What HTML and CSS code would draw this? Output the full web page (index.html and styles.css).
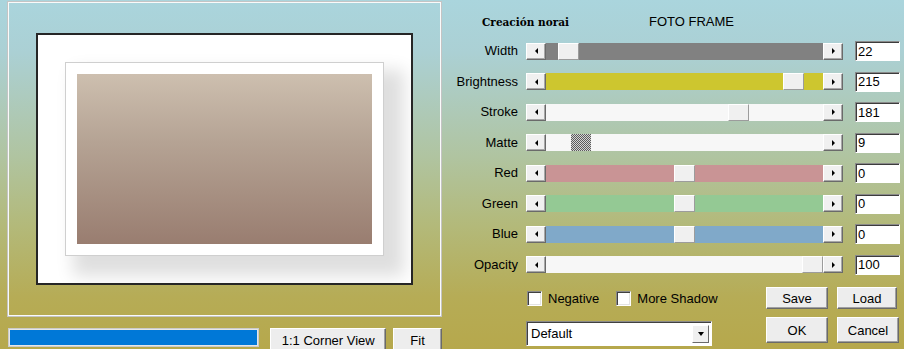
FILE: index.html
```html
<!DOCTYPE html>
<html lang="es">
<head>
  <meta charset="UTF-8">
  <title>Foto Frame</title>
  <link rel="stylesheet" href="styles.css">
</head>
<body>
  <!-- Columna izquierda: vista previa -->
  <div class="izquierda">
    <div class="preview">
      <div class="marco">
        <div class="tarjeta"><div class="foto"></div></div>
      </div>
    </div>
    <div class="estado">
      <div class="progreso"></div>
      <button class="btn corner">1:1 Corner View</button>
      <button class="btn fit">Fit</button>
    </div>
  </div>

  <!-- Columna derecha: controles -->
  <div class="derecha">
    <div class="cabecera">
      <span class="credito">Creación norai</span>
      <span class="titulo">FOTO FRAME</span>
    </div>

    <div class="controles">
      <div class="etiqueta">Width</div>
      <div class="scroll"><span class="flecha izq"></span><div class="pista gris"><span class="thumb" style="left:12px"></span></div><span class="flecha der"></span></div>
      <input class="valor" type="text" value="22">

      <div class="etiqueta">Brightness</div>
      <div class="scroll"><span class="flecha izq"></span><div class="pista amarillo"><span class="thumb" style="left:237px"></span></div><span class="flecha der"></span></div>
      <input class="valor" type="text" value="215">

      <div class="etiqueta">Stroke</div>
      <div class="scroll"><span class="flecha izq"></span><div class="pista"><span class="thumb" style="left:182px"></span></div><span class="flecha der"></span></div>
      <input class="valor" type="text" value="181">

      <div class="etiqueta">Matte</div>
      <div class="scroll"><span class="flecha izq"></span><div class="pista"><span class="thumb activo" style="left:25px"></span></div><span class="flecha der"></span></div>
      <input class="valor" type="text" value="9">

      <div class="etiqueta">Red</div>
      <div class="scroll"><span class="flecha izq"></span><div class="pista rojo"><span class="thumb" style="left:128px"></span></div><span class="flecha der"></span></div>
      <input class="valor" type="text" value="0">

      <div class="etiqueta">Green</div>
      <div class="scroll"><span class="flecha izq"></span><div class="pista verde"><span class="thumb" style="left:128px"></span></div><span class="flecha der"></span></div>
      <input class="valor" type="text" value="0">

      <div class="etiqueta">Blue</div>
      <div class="scroll"><span class="flecha izq"></span><div class="pista azul"><span class="thumb" style="left:128px"></span></div><span class="flecha der"></span></div>
      <input class="valor" type="text" value="0">

      <div class="etiqueta">Opacity</div>
      <div class="scroll"><span class="flecha izq"></span><div class="pista"><span class="thumb" style="left:256px"></span></div><span class="flecha der"></span></div>
      <input class="valor" type="text" value="100">
    </div>

    <div class="pie">
      <div class="fila">
        <div class="checks">
          <label class="check"><span class="caja"></span>Negative</label>
          <label class="check"><span class="caja"></span>More Shadow</label>
        </div>
        <button class="btn chico">Save</button>
        <button class="btn chico load">Load</button>
      </div>
      <div class="fila dos">
        <div class="combo">Default<span class="abajo"></span></div>
        <button class="btn grande ok">OK</button>
        <button class="btn grande cancel">Cancel</button>
      </div>
    </div>
  </div>
</body>
</html>
```

FILE: styles.css
```css
/* Estructura general de la ventana */
* {
  box-sizing: border-box;
}

body {
  margin: 0;
  width: 904px;
  height: 349px;
  overflow: hidden;
  display: flex;                                   /* Dos columnas */
  font-family: "Liberation Sans", Arial, sans-serif;
  font-size: 13px;
  color: #000;
  background: linear-gradient(to bottom, #aad5dd 0%, #abd0d4 15%, #b0c4a0 45%, #b3b979 65%, #b6ac56 85%, #b6a84c 100%);
}

/* Columna de la vista previa */
.izquierda {
  width: 442px;
  padding: 1px 0 0 7px;
}

.preview {
  width: 435px;
  height: 316px;
  border: 1px solid #c4c4c4;
  box-shadow: inset 1px 1px 0 #fafafa, inset -1px -1px 0 #fafafa;
  display: flex;
  align-items: center;
  justify-content: center;
}

/* Marco negro con el paspartú blanco */
.marco {
  width: 377px;
  height: 252px;
  border: 2px solid #262626;
  background: #fff;
  display: flex;
  align-items: center;
  justify-content: center;
  overflow: hidden;
}

.tarjeta {
  width: 319px;
  height: 194px;
  padding: 11px;
  background: #fff;
  border: 1px solid #cfcfcf;
  box-shadow: 14px 14px 16px 6px rgba(0, 0, 0, 0.13);
}

.foto {
  width: 100%;
  height: 100%;
  background: linear-gradient(to bottom, #cdbfaf, #b5a394 40%, #997d70);
}

/* Barra inferior con progreso y botones */
.estado {
  display: flex;
  align-items: flex-start;
  margin-top: 11px;
}

.progreso {
  width: 252px;
  height: 19px;
  margin-left: 1px;
  background: #0078d7;
  border: 1px solid #cbcbcb;
  box-shadow: inset 0 0 0 1px #e6e6e6;
}

.btn {
  font-family: inherit;
  font-size: 13px;
  color: #000;
  padding: 0;
  background: #ededed;
  border: 1px solid;
  border-color: #fff #6a6a6a #6a6a6a #fff;  /* Relieve clásico */
  box-shadow: inset -1px -1px 0 #a0a0a0;
}

.corner {
  width: 116px;
  height: 24px;
  margin-left: 11px;
}

.fit {
  width: 49px;
  height: 24px;
  margin-left: 7px;
}

/* Columna de controles */
.derecha {
  width: 462px;
  display: flex;
  flex-direction: column;
}

.cabecera {
  height: 41px;
  padding: 14px 0 0 40px;
  display: flex;
  align-items: baseline;
  line-height: 15px;
}

.credito {
  font-family: "DejaVu Serif", serif;
  font-weight: bold;
  font-size: 10.5px;
  width: 167px;
}

.titulo {
  font-size: 13px;
}

/* Rejilla de los deslizadores */
.controles {
  display: grid;
  grid-template-columns: 76px 317px 45px;
  grid-auto-rows: 20px;
  column-gap: 8px;
  row-gap: 10.57px;
  align-items: center;
}

.etiqueta {
  text-align: right;
  line-height: 20px;
}

.scroll {
  display: flex;
  height: 17px;
}

.flecha {
  width: 20px;
  height: 17px;
  background: #f0f0f0;
  border: 1px solid;
  border-color: #fff #6a6a6a #6a6a6a #fff;
  box-shadow: inset -1px -1px 0 #a8a8a8;
  display: flex;
  align-items: center;
  justify-content: center;
}

/* Triangulitos de las flechas */
.flecha::before {
  content: "";
  border-top: 3px solid transparent;
  border-bottom: 3px solid transparent;
}

.izq::before {
  border-right: 3px solid #000;
}

.der::before {
  border-left: 3px solid #000;
}

.pista {
  flex: 1;
  position: relative;
  background: #f7f7f7;
}

.gris { background: #818181; }
.amarillo { background: #cdc62f; }
.rojo { background: #c99495; }
.verde { background: #94c994; }
.azul { background: #80a9c9; }

.thumb {
  position: absolute;
  top: 0;
  width: 21px;
  height: 17px;
  background: #f0f0f0;
  border: 1px solid;
  border-color: #fff #9c9c9c #9c9c9c #fff;
}

/* Thumb presionado con trama */
.thumb.activo {
  border: none;
  width: 20px;
  background: repeating-conic-gradient(#5c5c5c 0% 25%, #d4d4d4 0% 50%) 0 0 / 2px 2px;
}

.valor {
  width: 45px;
  height: 20px;
  margin-left: 4px;
  padding: 0 0 0 2px;
  font-family: inherit;
  font-size: 13px;
  color: #000;
  background: #fff;
  border: 1px solid;
  border-color: #8a8a8a #fff #fff #8a8a8a;
  box-shadow: inset 1px 1px 0 #3c3c3c;
  outline: none;
}

/* Parte inferior: casillas y botones */
.pie {
  margin: 12.5px 0 0 84px;
}

.fila {
  display: flex;
  align-items: center;
  height: 22px;
}

.fila.dos {
  align-items: flex-start;
  height: 26px;
  margin-top: 8px;
}

.checks {
  width: 240px;
  display: flex;
  gap: 17px;
  padding-left: 1px;
}

.check {
  display: flex;
  align-items: center;
  gap: 6px;
}

.caja {
  width: 15px;
  height: 15px;
  background: #fff;
  border: 1px solid;
  border-color: #8a8a8a #fff #fff #8a8a8a;
  box-shadow: inset 1px 1px 0 #404040, inset -1px -1px 0 #e3e3e3;
}

.chico {
  width: 62px;
  height: 22px;
}

.load {
  width: 60px;
  margin-left: 9px;
}

.combo {
  width: 186px;
  height: 25px;
  margin-top: 4px;
  padding-left: 4px;
  line-height: 23px;
  background: #fff;
  border: 1px solid;
  border-color: #8a8a8a #fff #fff #8a8a8a;
  box-shadow: inset 1px 1px 0 #404040;
  display: flex;
  justify-content: space-between;
  align-items: center;
  padding-right: 2px;
}

.abajo {
  width: 17px;
  height: 18px;
  background: #f0f0f0;
  border: 1px solid;
  border-color: #fff #6a6a6a #6a6a6a #fff;
  display: flex;
  align-items: center;
  justify-content: center;
}

.abajo::before {
  content: "";
  border-left: 3px solid transparent;
  border-right: 3px solid transparent;
  border-top: 4px solid #000;
}

.grande {
  width: 62px;
  height: 26px;
}

.ok {
  margin-left: 54px;
}

.cancel {
  margin-left: 9px;
}
```
